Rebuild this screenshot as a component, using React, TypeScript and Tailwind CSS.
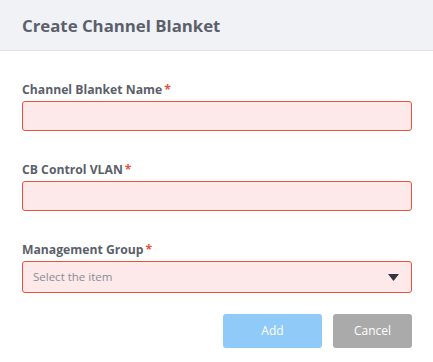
import React from "react";

function Label({ text }: { text: string }) {
  return (
    <div className="h-[20px] mb-px flex items-center text-[12.2px] font-bold text-[#5b5f6b] leading-none">
      <span>{text}</span>
      <span className="text-[#e5533d] ml-[2px]">*</span>
    </div>
  );
}

export default function App() {
  return (
    <div
      className="w-[433px] h-[362px] bg-white overflow-hidden"
      style={{ fontFamily: '"Open Sans", "Noto Sans", Arial, sans-serif' }}
    >
      <div className="h-[51px] bg-[#f1f2f6] border-b border-[#e2e3e7] flex items-center pl-[22px]">
        <h1 className="text-[16.8px] font-bold text-[#5b5f6b] leading-none mt-[2px]">Create Channel Blanket</h1>
      </div>
      <div className="pl-[22px] pr-[21px] pt-[29px]">
        <div className="flex flex-col gap-[29px]">
          <div>
            <Label text="Channel Blanket Name" />
            <div className="h-[30px] border border-[#e5533d] bg-[#fde9ea] rounded-[3px]" />
          </div>
          <div>
            <Label text="CB Control VLAN" />
            <div className="h-[30px] border border-[#e5533d] bg-[#fde9ea] rounded-[3px]" />
          </div>
          <div>
            <Label text="Management Group" />
            <div className="h-[32px] border border-[#e5533d] bg-[#fde9ea] rounded-[3px] flex items-center justify-between pl-[10px] pr-[12px]">
              <span className="text-[11.5px] text-[#8a8d96]">Select the item</span>
              <svg width="11" height="7" viewBox="0 0 11 7">
                <path d="M0 0 H11 L5.5 7 Z" fill="#333640" />
              </svg>
            </div>
          </div>
        </div>
        <div className="flex justify-end gap-[11px] mt-[21px]">
          <button className="w-[99px] h-[34px] rounded-[3px] bg-[#90caf9] text-white text-[12px]">Add</button>
          <button className="w-[79px] h-[34px] rounded-[3px] bg-[#aaaaaa] text-white text-[12px]">Cancel</button>
        </div>
      </div>
    </div>
  );
}
